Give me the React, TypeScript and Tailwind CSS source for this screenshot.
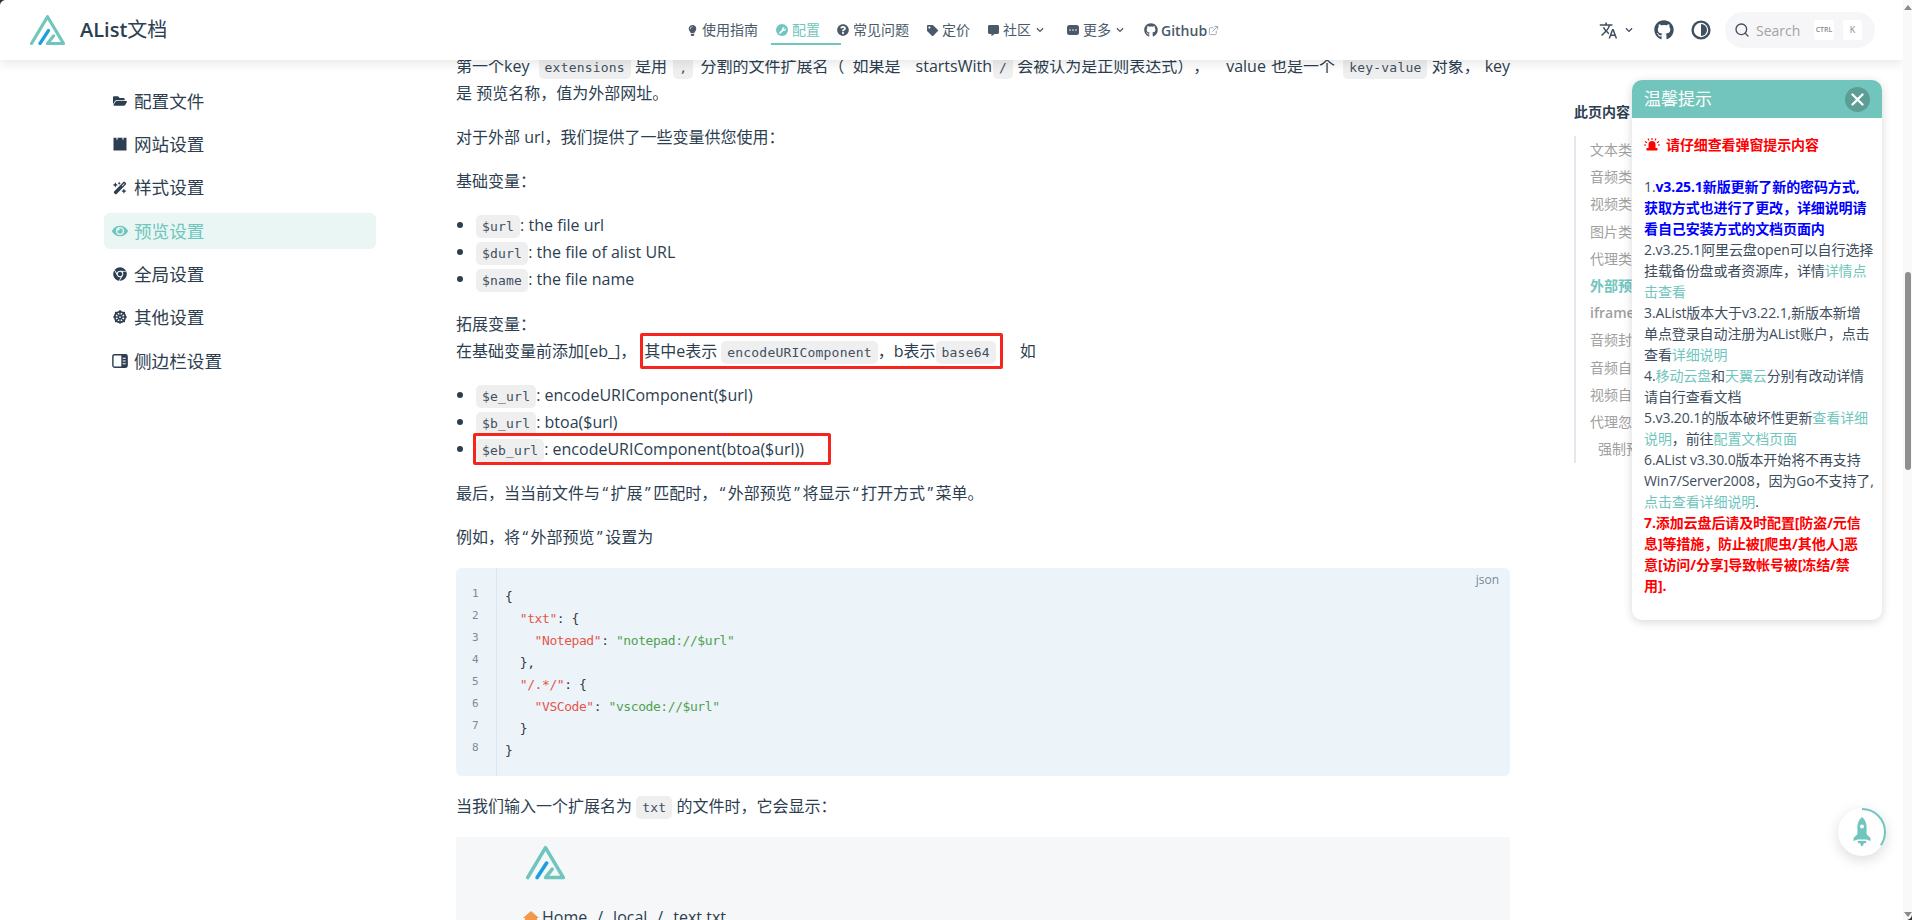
import type { ReactNode } from 'react';
import {
  FaChevronDown,
  FaChrome,
  FaCommentAlt,
  FaEye,
  FaFolderOpen,
  FaGithub,
  FaLightbulb,
  FaQuestionCircle,
  FaTag,
  FaWrench,
} from 'react-icons/fa';
import { FaDharmachakra, FaWandMagicSparkles } from 'react-icons/fa6';
import { FiExternalLink, FiSearch } from 'react-icons/fi';
import { MdTranslate } from 'react-icons/md';

const sansFont = "font-['Open_Sans','Noto_Sans_CJK_SC',sans-serif]";

function Logo({ width, height }: { width: number; height: number }) {
  return (
    <svg width={width} height={height} viewBox="0 0 35 30" fill="none" strokeLinecap="round" strokeLinejoin="round">
      <path d="M1.500 28.500 17.500 1.700 33.500 28.500H17.500L23.500 21" stroke="#70c6be" strokeWidth="3.2" />
      <path d="M10 28.500 18.500 15.500" stroke="#1a9fe0" strokeWidth="3.2" />
    </svg>
  );
}

function Code({ children, className = '' }: { children: ReactNode; className?: string }) {
  return (
    <code className={`rounded-[5px] bg-[#efefef] px-[6px] py-[4px] font-['DejaVu_Sans_Mono',monospace] text-[13px] leading-none tracking-[0.2px] text-[#3f5063] ${className}`}>
      {children}
    </code>
  );
}

// quotes in the reference sit wider than Open Sans sets them
function Quoted({ children }: { children: ReactNode }) {
  return (
    <>
      <span className="px-[2.5px]">“</span>
      {children}
      <span className="px-[2.5px]">”</span>
    </>
  );
}

function NavItem({
  icon,
  label,
  width,
  caret,
  active,
}: {
  icon: ReactNode;
  label: string;
  width: string;
  caret?: boolean;
  active?: boolean;
}) {
  return (
    <div className={`relative flex h-[30px] shrink-0 items-center gap-[4px] ${width} ${active ? 'text-[#70c6be]' : 'text-[#4a5a6a]'}`}>
      <span className="flex w-[12px] justify-center">{icon}</span>
      <span className="whitespace-nowrap text-[14px] leading-[20px]">{label}</span>
      {caret && <FaChevronDown className="ml-[1px] text-[8px]" />}
      {active && <span className="absolute left-[-5px] right-[-4px] top-[28px] h-[2px] bg-[#70c6be]" />}
    </div>
  );
}

function SidebarPanelIcon() {
  return (
    <svg width="18" height="16" viewBox="0 0 18 16">
      <rect x="1" y="1" width="16" height="14" rx="2" fill="none" stroke="#2c3e50" strokeWidth="1.6" />
      <rect x="10.500" y="1" width="6.500" height="14" fill="#2c3e50" />
      <path d="M12 5h3.400M12 8h3.400M12 11h3.400" stroke="#fff" strokeWidth="1.2" />
    </svg>
  );
}

function ClapperIcon() {
  return (
    <svg width="14" height="14" viewBox="0 0 14 14">
      <path d="M0.500 0.800h3v2h1v-2h5v2h1v-2h3v12.600h-13z" fill="#2c3e50" />
    </svg>
  );
}

function MoreIcon() {
  return (
    <svg width="12" height="10" viewBox="0 0 12 10">
      <rect width="12" height="10" rx="2.500" fill="#4a5a6a" />
      <path d="M3 5h.01M6 5h.01M9 5h.01" stroke="#fff" strokeWidth="1.6" strokeLinecap="round" />
    </svg>
  );
}

function SidebarItem({ icon, label, active }: { icon: ReactNode; label: string; active?: boolean }) {
  return (
    <div
      className={`flex h-[36px] items-center rounded-[6px] pl-[8px] text-[17.6px] ${
        active ? 'bg-[#e9f6f3] text-[#70c6be]' : 'text-[#2c3e50]'
      }`}
    >
      <span className="mr-[6px] flex w-[16px] justify-center text-[14px]">{icon}</span>
      {label}
    </div>
  );
}

function Siren() {
  return (
    <svg width="16" height="13" viewBox="0 0 16 13" className="mr-[6px] inline align-[-1px]">
      <path d="M4.500 10V6.500a3.500 3.500 0 0 1 7 0V10z" fill="#f00" />
      <rect x="2.500" y="10" width="11" height="2.500" rx="0.600" fill="#f00" />
      <path d="M1 3.500l2 1.300M4 0.600l1 1.800M8 0v2M12 0.600l-1 1.800M15 3.500l-2 1.300M0 7h2M14 7h2" stroke="#f00" strokeWidth="1.1" />
    </svg>
  );
}

function Link({ children }: { children: ReactNode }) {
  return <span className="text-[#70c6be]">{children}</span>;
}

function Notice() {
  return (
    <div className="absolute left-[1632px] top-[80px] z-20 h-[540px] w-[250px] overflow-hidden rounded-[10px] bg-white shadow-[0_2px_10px_rgba(0,0,0,0.16)]">
      <div className="flex h-[38px] items-center justify-between bg-[#71c5bc] pl-[12px] pr-[12px]">
        <span className="text-[17px] text-white">温馨提示</span>
        <span className="flex h-[25px] w-[25px] items-center justify-center rounded-full bg-[#5c9d96]">
          <svg width="13" height="13" viewBox="0 0 13 13">
            <path d="M1.500 1.500l10 10M11.500 1.500l-10 10" stroke="#fff" strokeWidth="2.400" strokeLinecap="round" />
          </svg>
        </span>
      </div>
      <div className="whitespace-nowrap px-[12px] pt-[16px] text-[14px] leading-[21px] tracking-[-0.1px] text-[#3d4d5c]">
        <div className="font-bold text-[#f00]">
          <Siren />
          请仔细查看弹窗提示内容
        </div>
        <div className="h-[21px]" />
        <div>
          1.
          <strong className="text-[#00f]">
            v3.25.1新版更新了新的密码方式,
            <br />
            获取方式也进行了更改，详细说明请
            <br />
            看自己安装方式的文档页面内
          </strong>
        </div>
        <div>
          2.v3.25.1阿里云盘open可以自行选择
          <br />
          挂载备份盘或者资源库，详情<Link>详情点</Link>
          <br />
          <Link>击查看</Link>
        </div>
        <div>
          3.AList版本大于v3.22.1,新版本新增
          <br />
          单点登录自动注册为AList账户，点击
          <br />
          查看<Link>详细说明</Link>
        </div>
        <div>
          4.<Link>移动云盘</Link>和<Link>天翼云</Link>分别有改动详情
          <br />
          请自行查看文档
        </div>
        <div>
          5.v3.20.1的版本破坏性更新<Link>查看详细</Link>
          <br />
          <Link>说明</Link>，前往<Link>配置文档页面</Link>
        </div>
        <div>
          6.AList v3.30.0版本开始将不再支持
          <br />
          Win7/Server2008，因为Go不支持了,
          <br />
          <Link>点击查看详细说明</Link>.
        </div>
        <div className="font-bold text-[#f00]">
          7.添加云盘后请及时配置[防盗/元信
          <br />
          息]等措施，防止被[爬虫/其他人]恶
          <br />
          意[访问/分享]导致帐号被[冻结/禁
          <br />
          用].
        </div>
      </div>
    </div>
  );
}

function Toc() {
  const items = ['文本类型', '音频类型', '视频类型', '图片类型', '代理类型', '外部预览', 'iframe预览', '音频封面', '音频自动播放', '视频自动播放', '代理忽略标头'];
  return (
    <aside className="w-[328px] shrink-0 pl-[64px] pt-[42px]">
      <div className="text-[14px] font-bold leading-[20px] text-[#2c3e50]">此页内容</div>
      <div className="mt-[14px] h-[327px] border-l-2 border-[#e6e6ef] pl-[14px] text-[14px] leading-[27.2px] text-[#a0a0a0]">
        {items.map((item) => (
          <div
            key={item}
            className={`h-[27.2px] ${item === '外部预览' ? 'font-bold text-[#70c6be]' : item === 'iframe预览' ? 'font-semibold' : ''}`}
          >
            {item}
          </div>
        ))}
        <div className="h-[27.2px] pl-[8px]">强制预览</div>
      </div>
    </aside>
  );
}

const codeLines: ReactNode[] = [
  '{',
  <>
    {'  '}
    <span className="text-[#e45649]">"txt"</span>: {'{'}
  </>,
  <>
    {'    '}
    <span className="text-[#e45649]">"Notepad"</span>: <span className="text-[#50a14f]">"notepad://$url"</span>
  </>,
  '  },',
  <>
    {'  '}
    <span className="text-[#e45649]">"/.*/"</span>: {'{'}
  </>,
  <>
    {'    '}
    <span className="text-[#e45649]">"VSCode"</span>: <span className="text-[#50a14f]">"vscode://$url"</span>
  </>,
  '  }',
  '}',
];

function CodeBlock() {
  return (
    <div className="relative mt-[17px] flex h-[208px] rounded-[6px] bg-[#ecf4fa]">
      <span className="absolute right-[11px] top-[3px] text-[12px] leading-[18px] text-[#7a8a99]">json</span>
      <div className="w-[41px] shrink-0 border-r border-[#d8e8f4] pl-[16px] pt-[15px] font-['DejaVu_Sans_Mono',monospace] text-[11px] leading-[22px] text-[#7c8a98]">
        {codeLines.map((_, i) => (
          <div key={i}>{i + 1}</div>
        ))}
      </div>
      <pre className="pl-[8px] pt-[18px] font-['DejaVu_Sans_Mono',monospace] text-[13px] leading-[22px] tracking-[-0.43px] text-[#383a42]">
        {codeLines.map((line, i) => (
          <div key={i} className="h-[22px]">
            {line}
          </div>
        ))}
      </pre>
    </div>
  );
}

function Bullet({ children }: { children: ReactNode }) {
  return (
    <li className="relative h-[27px] pl-[20px] before:absolute before:left-[1px] before:top-[10px] before:h-[6px] before:w-[6px] before:rounded-full before:bg-[#2c3e50]">
      {children}
    </li>
  );
}

function Article() {
  return (
    <main className="-mt-[7px] w-[1054px] shrink-0 text-[16px] leading-[27px] text-[#2c3e50] [text-spacing-trim:space-all]">
      <p>
        <span className="block h-[27px] whitespace-nowrap">
          第一个key <Code className="ml-[5px]">extensions</Code> 是用 <Code className="ml-[2px]">,</Code> <span className="ml-[3px]">分割的文件扩展名（</span>
          <span className="ml-[8px]">如果是</span> <span className="ml-[11px]">startsWith</span>
          <Code className="ml-[1px]">/</Code> 会被认为是正则表达式），<span className="ml-[17px]">value</span> <span className="ml-[1px]">也是一个</span> <Code className="ml-[4px]">key-value</Code> 对象，<span className="ml-[5px]">key</span>
        </span>
        <span className="block h-[27px]">是 预览名称，值为外部网址。</span>
      </p>
      <p className="mt-[17px] h-[27px]">对于外部 url，我们提供了一些变量供您使用：</p>
      <p className="mt-[17px] h-[27px]">基础变量：</p>
      <ul className="mt-[17px]">
        <Bullet>
          <Code>$url</Code>: the file url
        </Bullet>
        <Bullet>
          <Code>$durl</Code>: the file of alist URL
        </Bullet>
        <Bullet>
          <Code>$name</Code>: the file name
        </Bullet>
      </ul>
      <p className="mt-[18px]">
        <span className="block h-[27px]">拓展变量：</span>
        <span className="block h-[27px]">
          在基础变量前添加[eb_]，
          <span className="relative ml-[8px]">
            其中e表示<Code className="ml-[4px]">encodeURIComponent</Code>，b表示
            <Code>base64</Code>
            <span className="absolute bottom-[-7px] left-[-4px] right-[-7px] top-[-7px] rounded-[2px] border-[3px] border-[#f5241c]" />
          </span>
          <span className="ml-[24px]">如</span>
        </span>
      </p>
      <ul className="mt-[17px]">
        <Bullet>
          <Code>$e_url</Code>: encodeURIComponent($url)
        </Bullet>
        <Bullet>
          <Code>$b_url</Code>: btoa($url)
        </Bullet>
        <Bullet>
          <span className="relative">
            <Code>$eb_url</Code>: encodeURIComponent(btoa($url))
            <span className="absolute bottom-[-5px] left-[-3px] right-[-27px] top-[-5px] rounded-[2px] border-[3px] border-[#f5241c]" />
          </span>
        </Bullet>
      </ul>
      <p className="mt-[17px] h-[27px]">
        最后，当当前文件与<Quoted>扩展</Quoted>匹配时，<Quoted>外部预览</Quoted>将显示<Quoted>打开方式</Quoted>菜单。
      </p>
      <p className="mt-[17px] h-[27px]">
        例如，将<Quoted>外部预览</Quoted>设置为
      </p>
      <CodeBlock />
      <p className="mt-[17px] h-[27px]">
        当我们输入一个扩展名为 <Code>txt</Code> 的文件时，它会显示：
      </p>
      <div className="mt-[17px] h-[120px] bg-[#f6f7f9] pl-[67px] pt-[8px]">
        <div className="ml-[3px]">
          <Logo width={39} height={35} />
        </div>
        <div className="mt-[24px] flex items-center gap-[3px] text-[16px] text-[#2c3e50]">
          <svg width="16" height="14" viewBox="0 0 16 14">
            <path d="M8 0 16 7H14V14H2V7H0z" fill="#f2994a" />
          </svg>
          <span>Home</span>
          <span className="mx-[7px]">/</span>
          <span>local</span>
          <span className="mx-[7px]">/</span>
          <span>text.txt</span>
        </div>
      </div>
    </main>
  );
}

function Header() {
  return (
    <header className="relative z-10 flex h-[60px] shrink-0 items-center bg-white pl-[30px] shadow-[0_2px_12px_rgba(0,0,0,0.12)]">
      <div className="flex w-[656px] shrink-0 items-center">
        <Logo width={35} height={30} />
        <span className="ml-[15px] text-[20px] text-[#2c3e50]">
          <span className="font-semibold">AList</span>文档
        </span>
      </div>
      <nav className="flex items-center">
        <NavItem width="w-[90px]" icon={<FaLightbulb className="text-[11px]" />} label="使用指南" />
        <NavItem
          width="w-[61px]"
          active
          icon={
            <span className="flex h-[12px] w-[12px] items-center justify-center rounded-full bg-[#70c6be]">
              <FaWrench className="text-[7px] text-white" />
            </span>
          }
          label="配置"
        />
        <NavItem width="w-[89px]" icon={<FaQuestionCircle className="text-[12px]" />} label="常见问题" />
        <NavItem width="w-[61px]" icon={<FaTag className="text-[11px]" />} label="定价" />
        <NavItem width="w-[80px]" icon={<FaCommentAlt className="text-[11px]" />} label="社区" caret />
        <NavItem width="w-[77px]" icon={<MoreIcon />} label="更多" caret />
        <div className="flex items-center text-[#4a5a6a]">
          <FaGithub className="text-[14px]" />
          <span className="ml-[3px] text-[14px] font-semibold">Github</span>
          <FiExternalLink className="ml-[1px] text-[11px] text-[#9aa5b0]" />
        </div>
      </nav>
      <div className="ml-auto flex items-center pr-[28px] text-[#3f4f5f]">
        <MdTranslate className="text-[19px]" />
        <FaChevronDown className="ml-[7px] text-[8px]" />
        <FaGithub className="ml-[21px] text-[20px]" />
        <svg width="20" height="20" viewBox="0 0 20 20" className="ml-[17px]">
          <circle cx="10" cy="10" r="8.400" fill="none" stroke="#3f4f5f" strokeWidth="2.400" />
          <path d="M10 4a6 6 0 0 1 0 12z" fill="#3f4f5f" />
        </svg>
        <div className="ml-[14px] flex h-[36px] w-[150px] items-center rounded-[18px] bg-[#f6f6f8] pl-[9px]">
          <FiSearch className="text-[16px] text-[#3f4f5f]" />
          <span className="ml-[6px] w-[58px] text-[14px] text-[#a3a3a3]">Search</span>
          <span className="flex h-[20px] w-[20px] items-center justify-center rounded-[3px] bg-white text-[7px] font-semibold text-[#8a8a8a]">CTRL</span>
          <span className="ml-[9px] flex h-[20px] w-[19px] items-center justify-center rounded-[3px] bg-white text-[9px] text-[#8a8a8a]">K</span>
        </div>
      </div>
    </header>
  );
}

function Sidebar() {
  return (
    <aside className="w-[376px] shrink-0 pl-[104px] pr-0 pt-[23px]">
      <div className="flex flex-col gap-[7.3px]">
        <SidebarItem icon={<FaFolderOpen />} label="配置文件" />
        <SidebarItem icon={<ClapperIcon />} label="网站设置" />
        <SidebarItem icon={<FaWandMagicSparkles />} label="样式设置" />
        <SidebarItem active icon={<FaEye className="text-[16px]" />} label="预览设置" />
        <SidebarItem icon={<FaChrome />} label="全局设置" />
        <SidebarItem icon={<FaDharmachakra />} label="其他设置" />
        <SidebarItem icon={<SidebarPanelIcon />} label="侧边栏设置" />
      </div>
    </aside>
  );
}

function Scrollbar() {
  return (
    <div className="relative z-30 flex h-[920px] w-[9px] shrink-0 flex-col items-center bg-[#f9f9f9]">
      <span className="mt-[5px] h-0 w-0 border-x-[4px] border-b-[5px] border-x-transparent border-b-[#8a8a8a]" />
      <span className="mt-[262px] h-[198px] w-[6px] rounded-[3px] bg-[#8f8f8f]" />
      <span className="mb-[3px] mt-auto h-0 w-0 border-x-[4px] border-t-[5px] border-x-transparent border-t-[#8a8a8a]" />
    </div>
  );
}

function BackToTop() {
  return (
    <div className="absolute left-[1838px] top-[808px] z-20 flex h-[48px] w-[48px] items-center justify-center rounded-full bg-white shadow-[0_4px_14px_rgba(0,0,0,0.14)]">
      <svg width="48" height="48" viewBox="0 0 48 48" className="absolute inset-0">
        <circle cx="24" cy="24" r="23" fill="none" stroke="#70c6be" strokeWidth="2" strokeDasharray="50 200" transform="rotate(-90 24 24)" />
      </svg>
      <svg width="20" height="30" viewBox="0 0 20 30">
        <path
          fillRule="evenodd"
          d="M10 0c3 2.500 4.600 6 4.600 10v7.200L18.500 21v3l-4-1.600H5.500L1.500 24v-3l3.900-3.800V10C5.400 6 7 2.500 10 0zm0 7.500a2 2 0 1 0 0 4 2 2 0 0 0 0-4z"
          fill="#70c6be"
        />
        <path d="M5.500 24h9l-1 2.500-1.500-.6-1.200 3.100h-1.600l-1.200-3.100-1.500.6z" fill="#70c6be" />
      </svg>
    </div>
  );
}

function WindowCorners() {
  return (
    <>
      <svg width="6" height="6" viewBox="0 0 6 6" className="absolute left-0 top-0 z-40">
        <path d="M0 0H6C2.500 0 0 2.500 0 6z" fill="#333" />
      </svg>
      <svg width="6" height="6" viewBox="0 0 6 6" className="absolute bottom-0 right-0 z-40">
        <path d="M6 6H0C3.500 6 6 3.500 6 0z" fill="#333" />
      </svg>
    </>
  );
}

export default function App() {
  return (
    <div className={`relative flex h-[920px] w-[1912px] overflow-hidden bg-white ${sansFont}`}>
      <div className="flex h-full w-[1903px] shrink-0 flex-col">
        <Header />
        <div className="flex min-h-0 flex-1 overflow-hidden">
          <div className="flex">
            <Sidebar />
            <div className="w-[80px] shrink-0" />
            <Article />
            <Toc />
          </div>
        </div>
      </div>
      <Scrollbar />
      <Notice />
      <BackToTop />
      <WindowCorners />
    </div>
  );
}
